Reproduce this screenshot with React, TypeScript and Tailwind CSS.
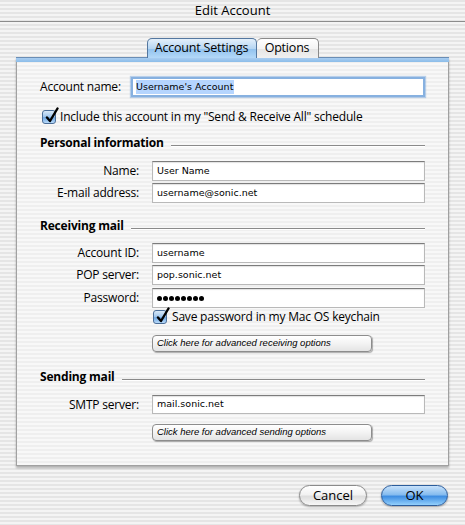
import React from "react";

const winStripe =
  "bg-[repeating-linear-gradient(180deg,#e5e5e5_0px,#e5e5e5_2px,#f4f4f4_2px,#f4f4f4_4px)]";
const panelStripe =
  "bg-[repeating-linear-gradient(180deg,#efefef_0px,#efefef_2px,#f8f8f8_2px,#f8f8f8_4px)]";

const Check = () => (
  <div className="relative w-[14px] h-[14px] shrink-0 rounded-[3px] border border-[#4b6e98] bg-[linear-gradient(180deg,#d9e9f8_0%,#9cc4ec_50%,#6ea6e2_55%,#b8dafa_100%)]">
    <svg className="absolute left-[1px] -top-[4px]" width="15" height="17" viewBox="0 0 15 17">
      <path d="M3 10.5 L6 14 L13.5 1.5" fill="none" stroke="#000" strokeWidth="2.4" strokeLinecap="round" strokeLinejoin="round" />
    </svg>
  </div>
);

const Field = ({ value, className = "" }: { value: string; className?: string }) => (
  <div
    className={`bg-white border border-[#b9b9b9] border-t-[#7c7c7c] shadow-[inset_0_1px_1px_rgba(0,0,0,0.12)] flex items-center pl-[4px] font-['DejaVu_Sans'] text-[9.5px] tracking-normal text-black ${className}`}
  >
    {value}
  </div>
);

const Section = ({ title }: { title: string }) => (
  <div className="flex items-center pl-[23px] pr-[23px] h-[16px]">
    <span className="font-bold text-[12px]">{title}</span>
    <div className="flex-1 ml-[7px] mt-[6px] border-t border-[#8a8a8a] border-b border-b-white" />
  </div>
);

const Row = ({ label, value, h = "h-[20px]" }: { label: string; value: string; h?: string }) => (
  <div className="flex items-center">
    <div className="w-[123px] text-right pr-[1px]">{label}</div>
    <Field value={value} className={`ml-[12px] w-[273px] ${h}`} />
  </div>
);

const AdvButton = ({ text }: { text: string }) => (
  <div className="ml-[135px] w-[220px] h-[17px] rounded-[4px] border border-[#8d8d8d] bg-[linear-gradient(180deg,#ffffff_0%,#f3f3f3_50%,#e4e4e4_100%)] shadow-[1px_1px_1px_rgba(0,0,0,0.3)] flex items-center pl-[4px] font-['Liberation_Sans'] italic text-[9.5px] tracking-normal">
    {text}
  </div>
);

export default function App() {
  return (
    <div className={`w-[465px] h-[525px] overflow-hidden ${winStripe} font-['Open_Sans'] text-[12px] tracking-[-0.2px] text-black flex flex-col`}>
      <div className="h-[22px] border-b border-[#8c8c8c] flex items-center justify-center text-[13px] tracking-normal leading-none">
        Edit Account
      </div>

      <div className="flex justify-center mt-[16px] relative z-10">
        <div className="h-[20px] w-[110px] rounded-t-[5px] border border-b-0 border-[#54779f] bg-[linear-gradient(180deg,#e4f0fb_0%,#b6d6f3_50%,#93c3ee_55%,#b3d8f8_100%)] flex items-center justify-center text-[12.5px]">
          Account Settings
        </div>
        <div className="h-[20px] w-[62px] rounded-t-[5px] border border-b-0 border-l-0 border-[#8a8a8a] bg-[linear-gradient(180deg,#ffffff_0%,#f4f4f4_50%,#e6e6e6_55%,#f0f0f0_100%)] flex items-center justify-center text-[12.5px]">
          Options
        </div>
      </div>

      <div className={`mx-[16px] -mt-[1px] h-[409px] border border-[#a1a1a1] border-t-0 ${panelStripe} shadow-[0_2px_2px_rgba(0,0,0,0.28)] flex flex-col`}>
        <div className="h-[5px] border-t border-[#6a8db5] bg-[linear-gradient(180deg,#a9cdf1_0%,#8bbde9_100%)] -mx-[1px]" />

        <div className="flex items-center pl-[23px] mt-[15px]">
          <div className="w-[91px]">Account name:</div>
          <div className="w-[294px] h-[20px] bg-white border-[2px] border-[#87b1e0] shadow-[0_0_1px_1px_rgba(120,165,220,0.5)] flex items-center pl-[3px] font-['DejaVu_Sans'] text-[9.5px] tracking-normal">
            <span className="bg-[#b5d5fe] pr-[1px]">Username's Account</span>
          </div>
        </div>

        <div className="flex items-center pl-[25px] mt-[12px] h-[16px] gap-[4px]">
          <Check />
          <span>Include this account in my "Send &amp; Receive All" schedule</span>
        </div>

        <div className="mt-[10px]">
          <Section title="Personal information" />
        </div>

        <div className="mt-[10px] flex flex-col gap-[2px]">
          <Row label="Name:" value="User Name" />
          <Row label="E-mail address:" value="username@sonic.net" />
        </div>

        <div className="mt-[15px]">
          <Section title="Receiving mail" />
        </div>

        <div className="mt-[9px] flex flex-col gap-[2px]">
          <Row label="Account ID:" value="username" />
          <Row label="POP server:" value="pop.sonic.net" />
          <div className="flex items-center mt-[1px]">
            <div className="w-[123px] text-right pr-[1px]">Password:</div>
            <div className="ml-[12px] w-[273px] h-[20px] bg-white border border-[#b9b9b9] border-t-[#7c7c7c] shadow-[inset_0_1px_1px_rgba(0,0,0,0.12)] flex items-center pl-[4px] gap-[1px]">
              {Array.from({ length: 8 }).map((_, i) => (
                <span key={i} className="w-[5px] h-[5px] rounded-full bg-black" />
              ))}
            </div>
          </div>
        </div>

        <div className="flex items-center pl-[136px] mt-[2px] h-[14px] gap-[5px]">
          <Check />
          <span>Save password in my Mac OS keychain</span>
        </div>

        <div className="mt-[11px]">
          <AdvButton text="Click here for advanced receiving options" />
        </div>

        <div className="mt-[17px]">
          <Section title="Sending mail" />
        </div>

        <div className="mt-[10px]">
          <Row label="SMTP server:" value="mail.sonic.net" h="h-[19px]" />
        </div>

        <div className="mt-[10px]">
          <AdvButton text="Click here for advanced sending options" />
        </div>
      </div>

      <div className="flex justify-end gap-[14px] pr-[17px] mt-[19px]">
        <div className="w-[68px] h-[21px] rounded-full border border-[#8a8a8a] bg-[linear-gradient(180deg,#ffffff_0%,#f2f2f2_45%,#dedede_55%,#f7f7f7_100%)] shadow-[0_1px_2px_rgba(0,0,0,0.3)] flex items-center justify-center text-[13px] tracking-normal">
          Cancel
        </div>
        <div className="w-[67px] h-[21px] rounded-full border border-[#2c5d9c] bg-[linear-gradient(180deg,#c8e2fb_0%,#86bcef_45%,#3f8ee2_55%,#93d0fc_100%)] shadow-[0_1px_2px_rgba(0,0,0,0.35)] flex items-center justify-center text-[13px] tracking-normal">
          OK
        </div>
      </div>
    </div>
  );
}
